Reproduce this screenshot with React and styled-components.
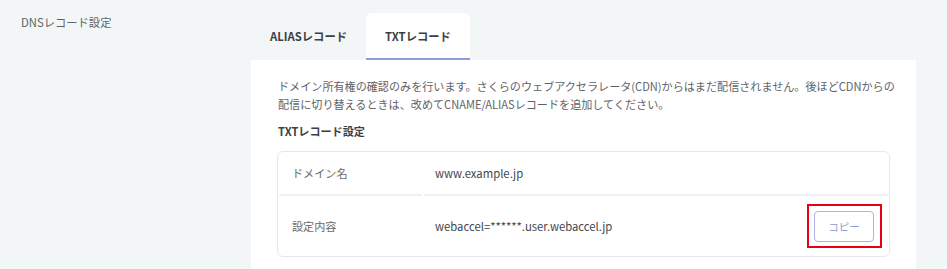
import React from "react";
import styled, { createGlobalStyle } from "styled-components";

const Global = createGlobalStyle`
  html, body { margin: 0; padding: 0; background: #f3f6f7; }
  body {
    font-family: "Noto Sans CJK JP", "Noto Sans", sans-serif;
    -webkit-font-smoothing: antialiased;
  }
`;

const Page = styled.div`
  display: flex;
  width: 947px;
  min-height: 269px;
  background: #f3f6f7;
`;

const Side = styled.div`
  width: 251px;
  flex: none;
  box-sizing: border-box;
  padding: 12px 0 0 21px;
  font-size: 11.3px;
  line-height: 20px;
  color: #5f6368;
`;

const Main = styled.div`
  width: 665px;
  flex: none;
  display: flex;
  flex-direction: column;
  padding-top: 13px;
`;

const Tabs = styled.div`
  display: flex;
`;

const Tab = styled.div`
  box-sizing: border-box;
  height: 47px;
  padding: 0 19px;
  display: flex;
  align-items: center;
  font-size: 11.3px;
  font-weight: 700;
  color: #3c3f44;
  border-radius: 6px 6px 0 0;
  background: ${(p) => (p.$active ? "#ffffff" : "transparent")};
  border-bottom: 2px solid ${(p) => (p.$active ? "#8d9bd9" : "transparent")};
`;

const Panel = styled.div`
  background: #ffffff;
  padding: 17px 26px 24px 26px;
`;

const Desc = styled.p`
  margin: 0 -8px 0 1px;
  font-size: 11.1px;
  line-height: 18px;
  color: #5f6368;
`;

const Title = styled.h3`
  margin: 9px 0 0 1px;
  font-size: 11.1px;
  line-height: 18px;
  font-weight: 700;
  color: #3c3f44;
`;

const Table = styled.div`
  margin-top: 11px;
  border: 1px solid #e6e8eb;
  border-radius: 6px;
  display: grid;
  grid-template-columns: 143px 1fr;
  column-gap: 2px;
  padding: 0 1px 0 1px;
`;

const Cell = styled.div`
  box-sizing: border-box;
  height: ${(p) => p.$h}px;
  display: flex;
  align-items: center;
  justify-content: space-between;
  padding: ${(p) => (p.$label ? "0 0 0 13px" : "0 6px 0 11px")};
  font-size: ${(p) => (p.$label ? "11.1px" : "11.3px")};
  color: ${(p) => (p.$label ? "#66696e" : "#44474c")};
  border-bottom: ${(p) => (p.$last ? "none" : "2px solid #eef0f2")};
`;

const Highlight = styled.div`
  border: 2px solid #e60012;
  padding: 5px 6px 4px 5px;
  display: flex;
`;

const CopyButton = styled.button`
  width: 60px;
  height: 31px;
  box-sizing: border-box;
  border: 1px solid #aab5e6;
  border-radius: 4px;
  background: #ffffff;
  color: #8f9bd3;
  font-family: "Noto Sans CJK JP", "Noto Sans", sans-serif;
  font-size: 10.5px;
  padding: 0;
  cursor: pointer;
`;

export default function App() {
  return (
    <>
      <Global />
      <Page>
        <Side>DNSレコード設定</Side>
        <Main>
          <Tabs>
            <Tab>ALIASレコード</Tab>
            <Tab $active>TXTレコード</Tab>
          </Tabs>
          <Panel>
            <Desc>
              ドメイン所有権の確認のみを行います。さくらのウェブアクセラレータ(CDN)からはまだ配信されません。後ほどCDNからの配信に切り替えるときは、改めてCNAME/ALIASレコードを追加してください。
            </Desc>
            <Title>TXTレコード設定</Title>
            <Table>
              <Cell $label $h={44}>ドメイン名</Cell>
              <Cell $h={44}>www.example.jp</Cell>
              <Cell $label $last $h={60}>設定内容</Cell>
              <Cell $last $h={60}>
                <span>webaccel=******.user.webaccel.jp</span>
                <Highlight>
                  <CopyButton>コピー</CopyButton>
                </Highlight>
              </Cell>
            </Table>
          </Panel>
        </Main>
      </Page>
    </>
  );
}
